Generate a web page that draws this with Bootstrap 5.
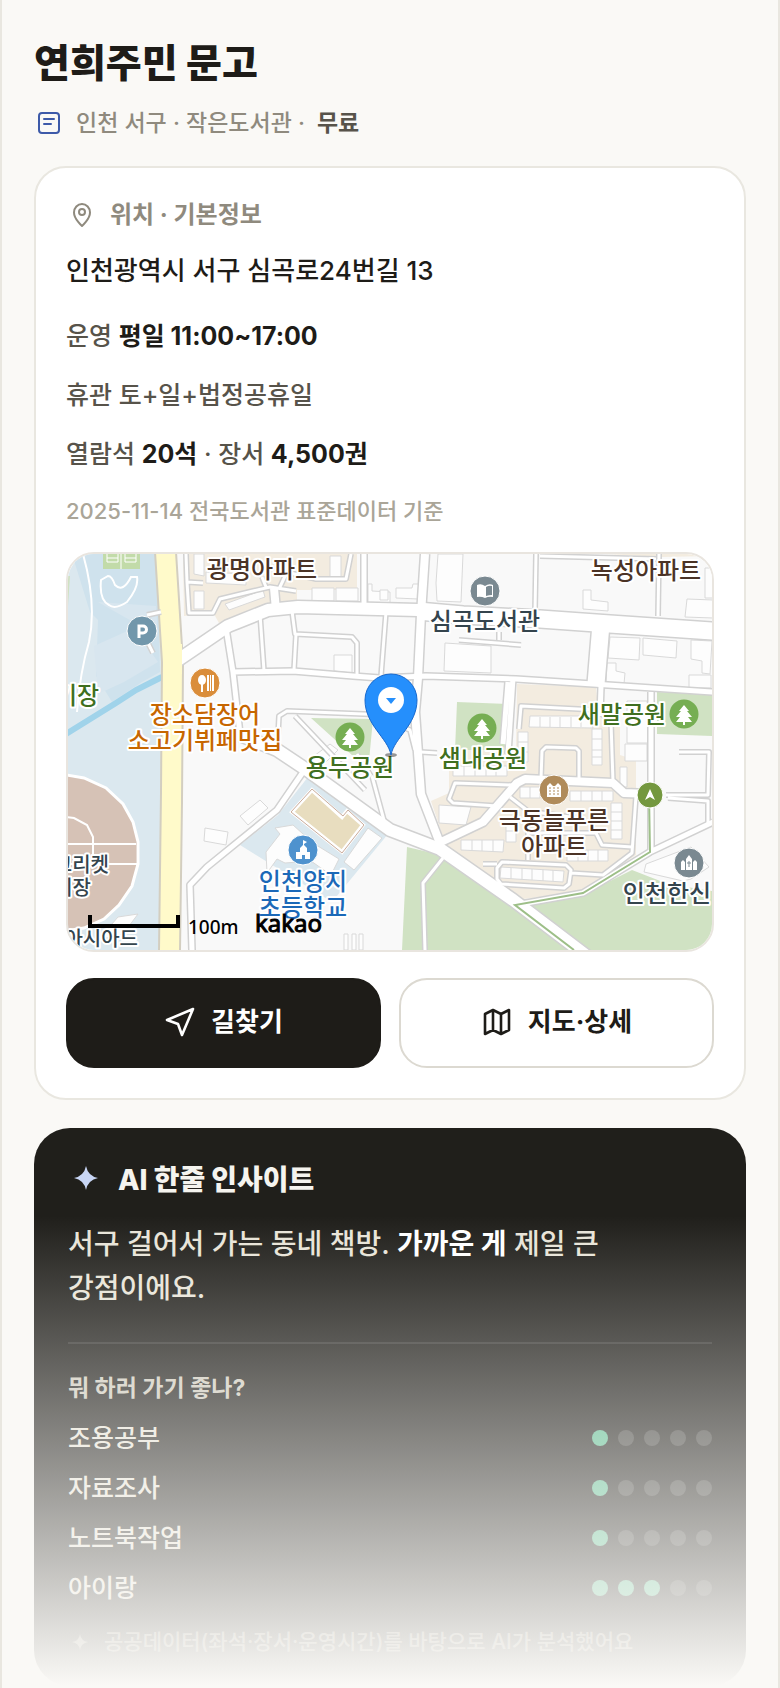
<!DOCTYPE html>
<html lang="ko">
<head>
<meta charset="utf-8">
<meta name="viewport" content="width=device-width, initial-scale=1">
<title>연희주민 문고</title>
<link rel="stylesheet" href="https://cdn.jsdelivr.net/npm/bootstrap@5.3.0/dist/css/bootstrap.min.css">
<style>
  body { background: #faf9f6; color: #1e1c18; font-family: "Inter", "Noto Sans CJK KR", sans-serif; font-size: 25px; font-weight: 500; line-height: 36px; }
  .frame { border: solid #e9e7e0; border-width: 0 2px; padding: 38px 32px 4px; }
  .ico { flex: none; fill: none; stroke: currentColor; stroke-width: 2; stroke-linecap: round; stroke-linejoin: round; }
  .place-title { font-size: 39px; line-height: 50px; font-weight: 800; margin-bottom: 19px; }
  .meta-row { font-size: 23px; line-height: 32px; color: #8f8a7e; gap: 12px; margin-bottom: 27px; }
  .meta-row .ico { color: #3d5aa9; }
  .meta-row strong { color: #57534a; font-weight: 600; }
  .info-card { border: 2px solid #e9e7e0; border-radius: 32px; padding: 30px; margin-bottom: 28px; }
  .info-head { font-size: 24px; line-height: 34px; font-weight: 700; color: #8f8a7e; gap: 12px; margin-bottom: 19px; }
  .address { font-size: 26px; line-height: 40px; margin-bottom: 27px; }
  .facts { gap: 23px; color: #57534a; margin-bottom: 25px; }
  .facts strong { color: #1e1c18; font-weight: 700; }
  .facts .source { font-size: 22px; line-height: 32px; color: #aaa598; }
  .map-box { border: 2px solid #e9e5df; border-radius: 28px; margin-bottom: 26px; }
  .map-box svg { width: 100%; height: auto; }
  .actions { gap: 18px; }
  .action { height: 90px; border-radius: 28px; border-width: 2px; font-size: 26px; line-height: 36px; font-weight: 700; gap: 15px; padding: 0 12px 2px; }
  .action .ico { stroke-width: 2.6; }
  .action-dark, .action-dark:hover { background: #1e1c18; border-color: #1e1c18; color: #fff; }
  .action-light, .action-light:hover { background: #fff; border-color: #dcd9d1; color: #1e1c18; }
  .ai-card { background: #201f1b; border-radius: 36px; padding: 34px 34px 29px; color: #e8e4d8; }
  .ai-head { font-size: 28px; line-height: 34px; font-weight: 800; color: #f5f4ef; gap: 14px; margin-bottom: 24px; }
  .spark { flex: none; fill: #c8d6f5; }
  .ai-text { font-size: 28px; line-height: 44px; margin-bottom: 32px; }
  .ai-text strong { color: #fff; }
  .ai-more { border-top: 2px solid rgba(255,255,255,.1); padding-top: 28px; }
  .ai-label { font-size: 23px; line-height: 32px; font-weight: 700; color: #cecabd; margin-bottom: 9px; }
  .score { height: 50px; }
  .pips { gap: 10px; }
  .pip { width: 16px; height: 16px; border-radius: 50%; background: rgba(255,255,255,.16); }
  .pip.on { background: #5bbc90; }
  .ai-note { font-size: 21px; line-height: 30px; color: #8a867a; gap: 12px; margin-top: 14px; }
  .ai-note .spark { fill: #8a867a; }
  .fade-out { top: 88px; background: linear-gradient(rgba(250,249,246,0), #faf9f6); pointer-events: none; }

  .lbl { font-family: "Noto Sans CJK KR", sans-serif; font-size: 24px; font-weight: 500; text-anchor: middle; paint-order: stroke; stroke: #fff; stroke-width: 4px; stroke-linejoin: round; }
  .lbl-s { font-size: 20px; text-anchor: end; }
  .c-apt { fill: #4b3326; } .c-lib { fill: #34444d; } .c-food { fill: #c76600; } .c-park { fill: #3f6f20; } .c-edu { fill: #1b69b8; }
  .bld { fill: #fdfdfd; stroke: #d9d9d9; stroke-width: 1; }
  .roads use { fill: none; stroke-linejoin: round; }
  .casing { stroke: #d1d1d1; }
  .surface { stroke: #fff; }
</style>
</head>
<body>
<main class="frame min-vh-100">
  <h1 class="place-title">연희주민 문고</h1>
  <div class="meta-row d-flex align-items-center">
    <svg class="ico" width="30" height="30" viewBox="0 0 30 30"><rect x="5" y="5" width="20" height="20" rx="3"/><path d="M10 11h10M10 16h7"/></svg>
    <span>인천 서구 · 작은도서관 ·</span><strong>무료</strong>
  </div>

  <section class="info-card bg-white">
    <div class="info-head d-flex align-items-center">
      <svg class="ico" width="32" height="32" viewBox="0 0 32 32"><path d="M24 13.500c0 6.500-8 13.500-8 13.500s-8-7-8-13.500a8 8.500 0 0 1 16 0z"/><circle cx="16" cy="13" r="3"/></svg>
      <span>위치 · 기본정보</span>
    </div>
    <div class="address">인천광역시 서구 심곡로24번길 13</div>
    <div class="facts d-flex flex-column">
      <div>운영 <strong>평일 11:00~17:00</strong></div>
      <div>휴관 토+일+법정공휴일</div>
      <div>열람석 <strong>20석</strong> · 장서 <strong>4,500권</strong></div>
      <div class="source">2025-11-14 전국도서관 표준데이터 기준</div>
    </div>

    <div class="map-box overflow-hidden">
      <svg class="d-block" viewBox="0 0 644 396" role="img" aria-label="지도">
        <defs>
          <g id="r-small">
            <path d="M118 0l1 28 16 1M119 28l2 31h24l7-14 33-8 17-4 26 4M211 35l8-17M218 18l30 7h30l5-25M198 33l-4-10"/>
            <path d="M192 60l4 57M224 57l3 23 57 3 5 6 0 33M228 80l-2 36M318 58l-5 64"/>
            <path d="M468 0l-1 58M591 0l-1 62M472 2l116 3M210 182l1-20 8-5 102 4M332 172l10 4 5 20M353 198l16 1"/>
            <path d="M451 175l2-23 76 4 14 12 2 60M473 225l1-28 4-4 30 1 3 3 0 28"/>
            <path d="M445 231l-58-2-6 16 4 4 44 3M442 243l18 14 42 6M460 306v-27h68l6 12 30 2M568 242l-4 57-29 22-32-2M415 310h14M429 314l5-6 64 3 5 5-2 14-5 4-63-4-4-5z"/>
            <path d="M375 304l-20 25 2 67M598 241l42 0 1-43h-30M600 244l40 3v22M304 222l13 48M289 200l14 22M297 236l-70-74M391 86l62 5M431 86v-8"/>
            <path d="M79 61l14-3M80 89l5 10"/>
          </g>
          <g id="r-mid">
            <path d="M158 74l7 44 7 62M165 118l60-1 60 5 27 2 46-2 90 3 77 5 120 8"/>
            <path d="M235 218l-26 38-70 57-17 18 2 65M445 124l-5 76M440 128l-5 62M583 138v158M533 132l-1 30M447 351l68-12 67-41 63-30M296 0v50"/>
          </g>
          <g id="r-big">
            <path d="M357 0l-4 60-3 64-3 34 6 82 20 52M373 288l42-20 34-39 8-4 88 4 11 10 27 1M206 34l2 22"/>
          </g>
          <g id="r-main">
            <path d="M110 106l50-34 40-16 30-3 120 3M172 181l37 15 30 20 83 60 50 19 73 51 75 57"/>
          </g>
          <g id="r-wide"><path d="M350 57l45 4 77 4 70 5 103 7M533 70l-5 60"/></g>
          <g id="tree"><circle r="14.500"/><path fill="#fff" d="M0-9l5 6H3l5 6H4l4 5H1v3h-2V8h-7l4-5h-4l5-6h-2z"/></g>
        </defs>

        <rect width="644" height="396" fill="#f9f9f9"/>
        <path fill="#dbe8ef" d="M0 0h90l5 125-2 271H0z"/>
        <path fill="#cfe2ed" d="M4 0h85l3 118-18 10-30 20-16-26 2-56-8-8z"/>
        <path fill="#d8e6ef" d="M26 92l40-18 24 34-34 20-26 12zM30 48l58 4 2 30z"/>
        <path fill="#d0e1c2" d="M0 22h2l-2 30z"/>
        <path fill="none" stroke="#a0d3ea" stroke-width="6" d="M-2 180l50-31 20-13 18-9 8-4"/>
        <path fill="none" stroke="#fff" stroke-width="2" d="M15 0q14 50 6 88-9 30-12 70M40 22q4 0 7 9 4 4 8 2 4-2 8-10l6 0q2 10-10 25-12 8-18 3-10-5-8-25z"/>
        <path fill="#c2dba9" d="M35 0h37v15H35z"/>
        <path fill="none" stroke="#fff" d="M39 0v8h11V0M57 0v8h11V0M53 0v15M39 4h11M57 4h11"/>
        <path fill="#d6c2b6" stroke="#cbb1a4" d="M-2 222l20 3 20 10 16 15 10 17 5 18 0 28-6 20-12 18-15 14-18 8-20 4z"/>
        <path fill="none" stroke="#fff" stroke-width="3" d="M-2 221l18 3 22 10 17 16 10 18 5 20 0 22-6 22-13 19-15 14-20 9-20 3"/>
        <path fill="none" stroke="#fff" stroke-width="2" d="M-2 263l8 1 13 7 6 12v27M-2 290h70M0 310h70"/>
        <path class="bld" d="M50 363l20-3-15 20-25 6z"/>
        <path fill="#fffaca" stroke="#d3cec0" stroke-width="2" d="M87-2l7 110-1 130-2 160h21l2-150 1-140-7-110z"/>

        <path fill="#f3ece0" d="M115 0h174v36l-60 0v12l-34 8-43 15-6-11-30 2zM537 0h107v2l-50 1z"/>
        <path fill="#f3ece0" d="M449 130l79 3 2 20 22 6v42l16 5v95l-53 37-68 8-69-54-15-45 18-8v-43l67 0z"/>
        <path fill="#d0e2c3" d="M389 148l51 2v30l-4 16-49 0zM589 138l55 2v42l-55-2zM243 164l62 1-4 42-16-5z"/>
        <path fill="#d0e2c3" d="M339 293l30 7 76 52 60 44H334zM449 353l67-13 48-24 36 14 44 7v59H512z"/>
        <path fill="#dbe8ef" d="M240 223l80 57-56 68-92-57 38-30z"/>
        <path fill="#e8ddbf" stroke="#fff" stroke-width="4" d="M244 236l30 27 5-6 16 14-21 27-50-40z"/>
        <path fill="none" stroke="#c9ab9b" d="M244 235l31 27 5-6 16 15-22 28-51-41z"/>

        <path class="bld" d="M126 0h10v22l-10-2zM126 37h10v18h-10zM157 50l38-14 2 7-36 13zM244 34h22v13h-22zM268 34h22v13h-22zM300 30h4v7l18 1v11h-22zM262 2h11v22h-11zM138 18l40 2v11l-40-2zM266 101h18v18l-18-2z"/>
        <path class="bld" d="M312 36h8v10h-8zM328 34h16l1-4h6l-1 15-22-1zM370 0h25l-2 48-24-1-1-18zM377 89l46 3v27l-47-2zM515 36h8v10l17 2v9l-25-2zM619 45l26 1v18l-28-1zM637 14h8v30h-8zM542 83l30 1-1 22-31-2zM575 84l34 3-1 17-33-3zM623 86l21 1-2 33-8-1v-12l-11-2zM539 109h9v8l9 2-1 11-18-1zM621 121h22v13h-22z"/>
        <path class="bld" d="M172 262l20-16 8 8-20 17zM137 274l23 4-2 13-22-4zM276 308l24-34 14 10-28 32zM198 298l14-18-5-6 18-3 20 18 26 16-8 16-20-14-26 2-8-4-10 14zM276 380h4v16h-4zM284 380h4v16h-4zM291 380h4v16h-4zM238 208l24-18 8 6-18 18zM371 251l32 2-5 18-27-2zM576 318l2-8 45-17 18 20-18 12-8 2zM559 147h20l2 14v28h-22zM552 213h7v20h-7zM557 190h22v17h-22z"/>
        <path class="bld" d="M462 162h60l3 12-64-1zM472 163v10M482 163v10M492 163v10M503 163v10M513 163v10M452 233h20v11h-20zM462 233v11M502 237h43v10h-43zM513 237v10M524 237v10M534 237v10M543 249h11v36h-11zM543 258h11M543 267h11M543 276h11M393 286h43l-1 12-42-2zM404 286v11M414 286v11M425 286v12M433 313l63 4-1 11-63-4zM443 314v11M454 314v12M464 315v11M475 315v12M485 316v11M499 296h41v11h-41zM510 296v11M520 296v11M530 296v11M385 212h54v10h-54zM396 212v10M407 212v10M418 212v10M428 212v10M450 178h10v30h-10zM450 188h10M450 198h10M524 175h10v36h-10zM524 185h10M524 196h10M524 203h10M438 266h10v22h-10zM438 277h10"/>

        <g class="roads">
          <g class="casing">
            <use href="#r-small" stroke-width="6"/><use href="#r-mid" stroke-width="8"/><use href="#r-big" stroke-width="11"/><use href="#r-main" stroke-width="15"/><use href="#r-wide" stroke-width="20"/>
          </g>
          <g class="surface">
            <use href="#r-small" stroke-width="3"/><use href="#r-mid" stroke-width="5"/><use href="#r-big" stroke-width="8"/><use href="#r-main" stroke-width="12"/><use href="#r-wide" stroke-width="17"/>
          </g>
        </g>
        <path fill="#fffaca" d="M104 90h10v30h-10z"/>
        <path fill="none" stroke="#9dbf88" stroke-width="2" d="M581 240l1 58-67 41-68 12 59 45"/>

        <g stroke="#fff" stroke-width="1">
          <circle cx="74" cy="77" r="15" fill="#7297ab"/>
          <circle cx="137" cy="129" r="15" fill="#da8d3a"/>
          <circle cx="417" cy="37" r="15" fill="#7a8991"/>
          <circle cx="486" cy="236" r="15" fill="#b08b5a"/>
          <circle cx="582" cy="241" r="13" fill="#74983f"/>
          <circle cx="621" cy="309" r="15" fill="#7a8991"/>
          <circle cx="235" cy="296" r="15" fill="#4e92ce"/>
        </g>
        <path fill="none" stroke="#fff" stroke-width="3" d="M71 84V72h4a3 3 0 0 1 0 7h-4"/>
        <g fill="#fff">
          <ellipse cx="134" cy="126" rx="4" ry="5"/><path d="M133 128h2v10h-2zM139 121h2v16h-2zM142 121h1v16h-1zM144 121h2v16h-2z"/>
          <path d="M409 31q4-2 8 1 4-3 8-1v12q-4-1-8 1-4-2-8-1z"/><path fill="#7a8991" d="M418 33q3-2 6-1v9q-3 0-6 1z"/>
          <path d="M479 243v-11l3-3 3 3h2l3-3 3 3v11z"/><path fill="none" stroke="#b08b5a" stroke-dasharray="2 2" d="M481 234h11M481 237h11M481 240h11"/>
          <path d="M582 235l5 11-5-3-5 3z"/>
          <path d="M618 316v-11l3-4 3 4v11zM613 316v-8l2-2 2 2v8zM625 316v-8l2-2 2 2v8z"/><path stroke="#7a8991" d="M621 307v6M619 309h4"/>
          <path d="M228 305v-7h4v-4l3-3v-5l4 2-3 2v1l3 3v4h3v7h-5v-4h-3v4z"/>
        </g>
        <g fill="#76ae53" stroke="none">
          <use href="#tree" x="282" y="183"/><use href="#tree" x="414" y="174"/><use href="#tree" x="616" y="160"/>
        </g>

        <text class="lbl c-apt" x="194" y="24">광명아파트</text>
        <text class="lbl c-apt" x="578" y="25">녹성아파트</text>
        <text class="lbl c-lib" x="417" y="76">심곡도서관</text>
        <text class="lbl c-park" x="-2" y="150">경기장</text>
        <text class="lbl c-food" x="137" y="169">장소담장어</text>
        <text class="lbl c-food" x="137" y="195">소고기뷔페맛집</text>
        <text class="lbl c-park" x="282" y="222">용두공원</text>
        <text class="lbl c-park" x="415" y="213">샘내공원</text>
        <text class="lbl c-park" x="554" y="169">새말공원</text>
        <text class="lbl c-apt" x="486" y="275">극동늘푸른</text>
        <text class="lbl c-apt" x="486" y="301">아파트</text>
        <text class="lbl c-edu" x="235" y="336">인천양지</text>
        <text class="lbl c-edu" x="235" y="362">초등학교</text>
        <text class="lbl c-lib" x="599" y="348">인천한신</text>
        <text class="lbl lbl-s c-lib" x="41" y="318">크리켓</text>
        <text class="lbl lbl-s c-lib" x="23" y="341">경기장</text>
        <text class="lbl lbl-s c-lib" x="70" y="392">아시아드</text>

        <ellipse cx="323" cy="201" rx="6" ry="2" fill="#000" opacity=".4"/>
        <path fill="#258ffc" stroke="#1769cf" d="M323 201c-3-17-26-30-26-55a26 26 0 0 1 52 0c0 25-23 38-26 55z"/>
        <circle cx="323" cy="146" r="13" fill="#fff"/><path fill="#258ffc" d="M318 144h10l-5 6z"/>

        <path fill="none" stroke="#000" stroke-width="4" d="M22 361v11h88v-11"/>
        <text x="120" y="380" font-family="Noto Sans" font-size="19">100m</text>
        <text x="187" y="378" font-family="Noto Sans" font-size="24" font-weight="400" stroke="#000">kakao</text>
      </svg>
    </div>

    <div class="actions d-flex">
      <button type="button" class="btn action action-dark flex-fill w-50 d-flex align-items-center justify-content-center">
        <svg class="ico" width="32" height="32" viewBox="0 0 32 32"><path d="M29 3L3 14l11 4 4 11z"/></svg><span>길찾기</span>
      </button>
      <button type="button" class="btn action action-light flex-fill w-50 d-flex align-items-center justify-content-center">
        <svg class="ico" width="32" height="32" viewBox="0 0 32 32"><path d="M4 8l8-4 8 4 8-4v20l-8 4-8-4-8 4zM12 4v20M20 8v20"/></svg><span>지도·상세</span>
      </button>
    </div>
  </section>

  <div class="position-relative">
    <section class="ai-card">
      <div class="ai-head d-flex align-items-center">
        <svg class="spark" width="36" height="36" viewBox="0 0 36 36"><path d="M18 4q2 10 12 12-10 2-12 12-2-10-12-12 10-2 12-12z"/></svg>
        <span>AI 한줄 인사이트</span>
      </div>
      <p class="ai-text">서구 걸어서 가는 동네 책방. <strong>가까운 게</strong> 제일 큰<br>강점이에요.</p>
      <div class="ai-more">
        <div class="ai-label">뭐 하러 가기 좋나?</div>
        <div class="score d-flex align-items-center justify-content-between"><span>조용공부</span><span class="pips d-flex"><i class="pip on"></i><i class="pip"></i><i class="pip"></i><i class="pip"></i><i class="pip"></i></span></div>
        <div class="score d-flex align-items-center justify-content-between"><span>자료조사</span><span class="pips d-flex"><i class="pip on"></i><i class="pip"></i><i class="pip"></i><i class="pip"></i><i class="pip"></i></span></div>
        <div class="score d-flex align-items-center justify-content-between"><span>노트북작업</span><span class="pips d-flex"><i class="pip on"></i><i class="pip"></i><i class="pip"></i><i class="pip"></i><i class="pip"></i></span></div>
        <div class="score d-flex align-items-center justify-content-between"><span>아이랑</span><span class="pips d-flex"><i class="pip on"></i><i class="pip on"></i><i class="pip on"></i><i class="pip"></i><i class="pip"></i></span></div>
        <div class="ai-note d-flex align-items-center">
          <svg class="spark" width="24" height="24" viewBox="0 0 24 24"><path d="M12 4q1 7 8 8-7 1-8 8-1-7-8-8 7-1 8-8z"/></svg>
          <span>공공데이터(좌석·장서·운영시간)를 바탕으로 AI가 분석했어요</span>
        </div>
      </div>
    </section>
    <div class="fade-out position-absolute start-0 end-0 bottom-0"></div>
  </div>
</main>
<script src="https://cdn.jsdelivr.net/npm/bootstrap@5.3.0/dist/js/bootstrap.bundle.min.js"></script>
</body>
</html>
